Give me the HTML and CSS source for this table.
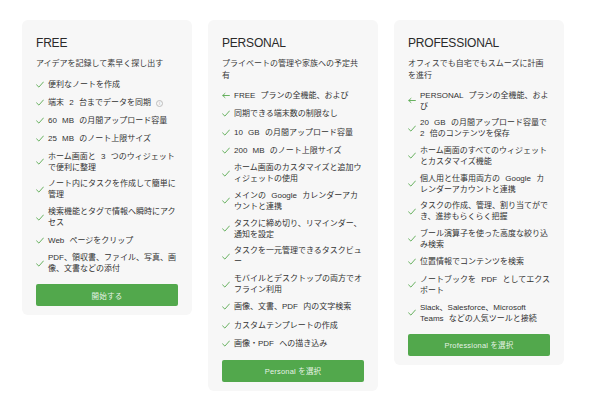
FILE: index.html
```html
<!DOCTYPE html>
<html lang="ja">
<head>
<meta charset="utf-8">
<title>Plans</title>
<link rel="stylesheet" href="styles.css">
</head>
<body>
<svg width="0" height="0" class="defs" aria-hidden="true">
  <defs>
    <symbol id="chk" viewBox="0 0 8 7"><path d="M0.6 3.9 L2.9 6.1 L7.4 1" fill="none" stroke="currentColor" stroke-width="0.9" stroke-linecap="round" stroke-linejoin="round"/></symbol>
    <symbol id="arr" viewBox="0 0 8 7"><path d="M7.4 3.5 H0.8 M3 1.4 L0.8 3.5 L3 5.6" fill="none" stroke="currentColor" stroke-width="0.9" stroke-linecap="round" stroke-linejoin="round"/></symbol>
  </defs>
</svg>
<main class="plans">
  <section class="card">
    <h2 class="title">FREE</h2>
    <p class="desc">アイデアを記録して素早く探し出す</p>
    <ul class="list">
      <li class="item"><svg class="ic"><use href="#chk"/></svg><span class="txt">便利なノートを作成</span></li>
      <li class="item"><svg class="ic"><use href="#chk"/></svg><span class="txt">端末 2 台までデータを同期 <span class="info">i</span></span></li>
      <li class="item"><svg class="ic"><use href="#chk"/></svg><span class="txt">60 MB の月間アップロード容量</span></li>
      <li class="item"><svg class="ic"><use href="#chk"/></svg><span class="txt">25 MB のノート上限サイズ</span></li>
      <li class="item"><svg class="ic"><use href="#chk"/></svg><span class="txt">ホーム画面と 3 つのウィジェットで便利に整理</span></li>
      <li class="item"><svg class="ic"><use href="#chk"/></svg><span class="txt">ノート内にタスクを作成して簡単に管理</span></li>
      <li class="item"><svg class="ic"><use href="#chk"/></svg><span class="txt">検索機能とタグで情報へ瞬時にアクセス</span></li>
      <li class="item"><svg class="ic"><use href="#chk"/></svg><span class="txt">Web ページをクリップ</span></li>
      <li class="item"><svg class="ic"><use href="#chk"/></svg><span class="txt">PDF、領収書、ファイル、写真、画像、文書などの添付</span></li>
    </ul>
    <button class="btn">開始する</button>
  </section>

  <section class="card">
    <h2 class="title">PERSONAL</h2>
    <p class="desc">プライベートの管理や家族への予定共有</p>
    <ul class="list">
      <li class="item"><svg class="ic"><use href="#arr"/></svg><span class="txt">FREE プランの全機能、および</span></li>
      <li class="item"><svg class="ic"><use href="#chk"/></svg><span class="txt">同期できる端末数の制限なし</span></li>
      <li class="item"><svg class="ic"><use href="#chk"/></svg><span class="txt">10 GB の月間アップロード容量</span></li>
      <li class="item"><svg class="ic"><use href="#chk"/></svg><span class="txt">200 MB のノート上限サイズ</span></li>
      <li class="item"><svg class="ic"><use href="#chk"/></svg><span class="txt">ホーム画面のカスタマイズと追加ウィジェットの使用</span></li>
      <li class="item"><svg class="ic"><use href="#chk"/></svg><span class="txt">メインの Google カレンダーアカウントと連携</span></li>
      <li class="item"><svg class="ic"><use href="#chk"/></svg><span class="txt">タスクに締め切り、リマインダー、通知を設定</span></li>
      <li class="item"><svg class="ic"><use href="#chk"/></svg><span class="txt">タスクを一元管理できるタスクビュー</span></li>
      <li class="item"><svg class="ic"><use href="#chk"/></svg><span class="txt">モバイルとデスクトップの両方でオフライン利用</span></li>
      <li class="item"><svg class="ic"><use href="#chk"/></svg><span class="txt">画像、文書、PDF 内の文字検索</span></li>
      <li class="item"><svg class="ic"><use href="#chk"/></svg><span class="txt">カスタムテンプレートの作成</span></li>
      <li class="item"><svg class="ic"><use href="#chk"/></svg><span class="txt">画像・PDF への描き込み</span></li>
    </ul>
    <button class="btn">Personal を選択</button>
  </section>

  <section class="card">
    <h2 class="title">PROFESSIONAL</h2>
    <p class="desc">オフィスでも自宅でもスムーズに計画を進行</p>
    <ul class="list">
      <li class="item"><svg class="ic"><use href="#arr"/></svg><span class="txt">PERSONAL プランの全機能、および</span></li>
      <li class="item"><svg class="ic"><use href="#chk"/></svg><span class="txt">20 GB の月間アップロード容量で 2 倍のコンテンツを保存</span></li>
      <li class="item"><svg class="ic"><use href="#chk"/></svg><span class="txt">ホーム画面のすべてのウィジェットとカスタマイズ機能</span></li>
      <li class="item"><svg class="ic"><use href="#chk"/></svg><span class="txt">個人用と仕事用両方の Google カレンダーアカウントと連携</span></li>
      <li class="item"><svg class="ic"><use href="#chk"/></svg><span class="txt">タスクの作成、管理、割り当てができ、進捗もらくらく把握</span></li>
      <li class="item"><svg class="ic"><use href="#chk"/></svg><span class="txt">ブール演算子を使った高度な絞り込み検索</span></li>
      <li class="item"><svg class="ic"><use href="#chk"/></svg><span class="txt">位置情報でコンテンツを検索</span></li>
      <li class="item"><svg class="ic"><use href="#chk"/></svg><span class="txt">ノートブックを PDF としてエクスポート</span></li>
      <li class="item"><svg class="ic"><use href="#chk"/></svg><span class="txt">Slack、Salesforce、Microsoft Teams などの人気ツールと接続</span></li>
    </ul>
    <button class="btn">Professional を選択</button>
  </section>
</main>
</body>
</html>
```

FILE: styles.css
```css
* { box-sizing: border-box; }

html, body {
  margin: 0;
  padding: 0;
  background: #ffffff;
}

body {
  font-family: "Liberation Sans", "Noto Sans CJK JP", sans-serif;
  color: #333333;
}

.defs {
  position: absolute;
  width: 0;
  height: 0;
  overflow: hidden;
}

.plans {
  display: flex;
  align-items: flex-start;
  gap: 16px;
  padding: 20px 0 0 22px;
}

.card {
  width: 170px;
  background: #f7f7f7;
  border-radius: 6px;
  padding: 16px 14px 9px;
  display: flex;
  flex-direction: column;
}

.title {
  margin: 0 0 7px;
  font-size: 12px;
  line-height: 15px;
  font-weight: 400;
  letter-spacing: -0.2px;
  color: #2a2a2a;
}

.desc {
  margin: 0 0 8.5px;
  font-size: 8px;
  line-height: 11.5px;
  color: #3a3a3a;
  word-spacing: 3px;
}

.list {
  list-style: none;
  margin: 0;
  padding: 0;
  display: flex;
  flex-direction: column;
  gap: 5.7px;
}

.item {
  display: flex;
  align-items: center;
  gap: 4px;
  min-height: 12.5px;
  font-size: 8px;
  line-height: 11px;
  color: #333333;
  word-spacing: 3px;
}

.ic {
  flex: 0 0 8px;
  width: 8px;
  height: 7px;
  color: #58a94f;
}

.txt {
  flex: 1 1 auto;
  min-width: 0;
}

.info {
  display: inline-flex;
  align-items: center;
  justify-content: center;
  width: 7px;
  height: 7px;
  border: 0.7px solid #bdbdbd;
  border-radius: 50%;
  font-size: 5px;
  line-height: 1;
  color: #b5b5b5;
  vertical-align: 0;
  word-spacing: 0;
}

.btn {
  margin-top: 10px;
  height: 22px;
  width: 100%;
  border: 0;
  border-radius: 2px;
  background: #52a84c;
  color: rgba(255, 255, 255, 0.88);
  font-family: "Liberation Sans", "Noto Sans CJK JP", sans-serif;
  font-size: 7.5px;
  letter-spacing: 0.2px;
  padding: 0;
}
```
